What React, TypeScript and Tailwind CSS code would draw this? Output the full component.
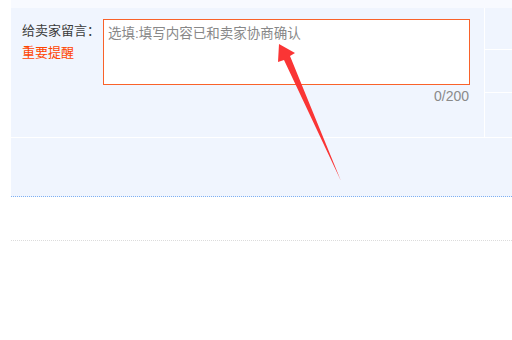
export default function App() {
  return (
    <div className="relative w-[512px] h-[340px] bg-white font-['Liberation_Sans','Noto_Sans_CJK_SC',sans-serif] overflow-hidden">
      <div className="ml-[11px]">
        {/* top strip */}
        <div className="h-[8px] bg-[#f8faff]" />

        {/* message row */}
        <div className="flex h-[129px] bg-[#f0f5fe]">
          <div className="flex flex-1 pl-[11px] pt-[11px]">
            <div className="w-[81px] pt-[1px] text-[13px] leading-[22px]">
              <div className="text-[#3c3c3c]">给卖家留言：</div>
              <div className="text-[#ff4400]">重要提醒</div>
            </div>
            <div className="w-[367px]">
              <div className="h-[66px] border-solid border-[1px] [border-color:#f9622a] bg-white px-[4px] pt-[1px]">
                <span className="text-[13.5px] leading-[20px] text-[#888]">选填:填写内容已和卖家协商确认</span>
              </div>
              <div className="mt-[2px] pr-[1px] text-right text-[14px] leading-[18px] text-[#8a8a8a]">
                0/200
              </div>
            </div>
          </div>
          <div className="flex w-[28px] flex-col border-l border-white">
            <div className="h-[42px] border-b border-white" />
            <div className="h-[43px] border-b border-white" />
            <div className="flex-1" />
          </div>
        </div>

        <div className="h-[1px] bg-white" />

        {/* second blue band */}
        <div className="h-[59px] bg-[#f0f5fe] border-b border-dotted [border-color:#7fb0f2]" />

        {/* empty row */}
        <div className="h-[44px] border-b border-dotted [border-color:#dcdcdc]" />
      </div>

      {/* annotation arrow */}
      <svg className="absolute left-0 top-0" width="512" height="340" viewBox="0 0 512 340">
        <polygon
          points="279,44 295,53 290,56 341,181 284,60 278,62"
          fill="#fa3535"
        />
      </svg>
    </div>
  );
}
